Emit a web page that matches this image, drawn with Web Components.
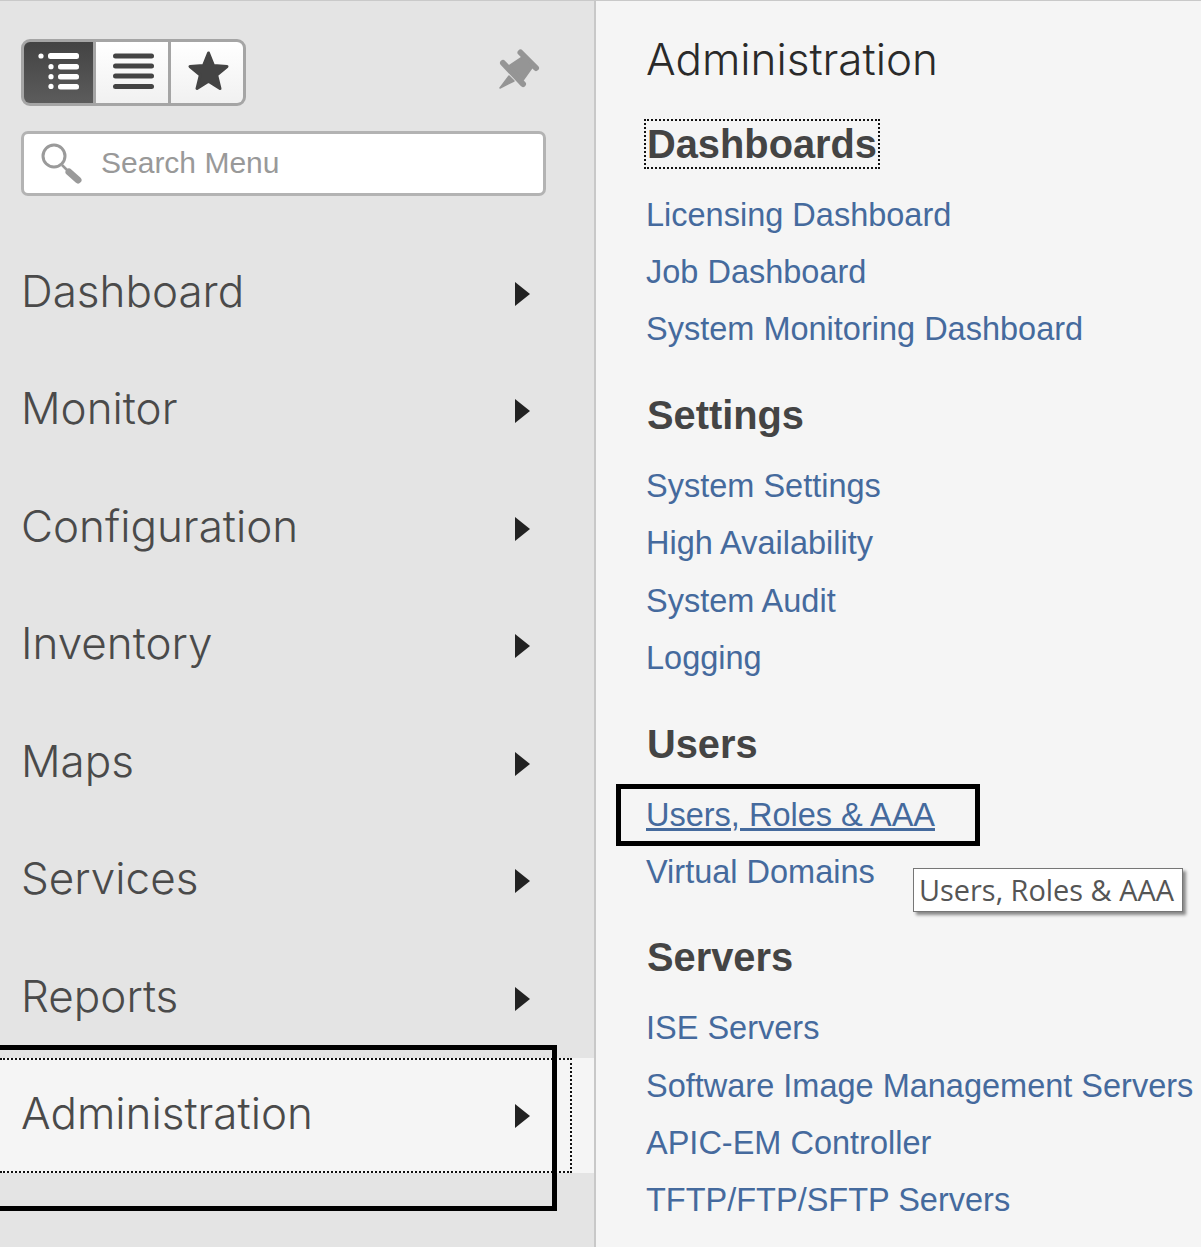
<!DOCTYPE html>
<html>
<head>
<meta charset="utf-8">
<title>Administration menu</title>
<style>
html, body { margin: 0; padding: 0; height: 1247px; overflow: hidden; background: #f5f5f5; }
body { font-family: "Liberation Sans", Arial, sans-serif; }
</style>
</head>
<body>
<nav-shell>
  <side-menu slot="side">
    <menu-item>Dashboard</menu-item>
    <menu-item>Monitor</menu-item>
    <menu-item>Configuration</menu-item>
    <menu-item>Inventory</menu-item>
    <menu-item>Maps</menu-item>
    <menu-item>Services</menu-item>
    <menu-item>Reports</menu-item>
    <menu-item active>Administration</menu-item>
  </side-menu>
  <admin-panel slot="main" heading="Administration">
    <link-group title="Dashboards" focused>
      <a-link>Licensing Dashboard</a-link>
      <a-link>Job Dashboard</a-link>
      <a-link>System Monitoring Dashboard</a-link>
    </link-group>
    <link-group title="Settings">
      <a-link>System Settings</a-link>
      <a-link>High Availability</a-link>
      <a-link>System Audit</a-link>
      <a-link>Logging</a-link>
    </link-group>
    <link-group title="Users">
      <a-link hover>Users, Roles &amp; AAA</a-link>
      <a-link>Virtual Domains</a-link>
    </link-group>
    <link-group title="Servers">
      <a-link>ISE Servers</a-link>
      <a-link>Software Image Management Servers</a-link>
      <a-link>APIC-EM Controller</a-link>
      <a-link>TFTP/FTP/SFTP Servers</a-link>
    </link-group>
  </admin-panel>
  <mark-box slot="over" style="left:-10px;top:1044px;width:567px;height:166px"></mark-box>
  <mark-box slot="over" style="left:616px;top:783px;width:364px;height:62px"></mark-box>
  <hover-tip slot="over" style="left:913px;top:867px">Users, Roles &amp; AAA</hover-tip>
</nav-shell>

<script>
class NavShell extends HTMLElement {
    constructor() {
        super();
        this.attachShadow({mode: 'open'}).innerHTML = `
        <style>
        :host { display: flex; position: relative; width: 1201px; height: 1247px; overflow: hidden; border-top: 1px solid #c9c9c9; box-sizing: border-box; }
        </style>
        <slot name="side"></slot>
        <slot name="main"></slot>
        <slot name="over"></slot>
        `;
    }
}

class SideMenu extends HTMLElement {
    constructor() {
        super();
        this.attachShadow({mode: 'open'}).innerHTML = `
        <style>
        :host { display: block; flex: none; box-sizing: border-box; width: 596px; height: 1246px; background: #e4e4e4; border-right: 2px solid #c8c8c8; padding-top: 38px; }
        .tools { display: flex; justify-content: space-between; align-items: flex-start; height: 67px; padding: 0 49px 0 21px; }
        .pin { margin-top: 6px; }
        view-toggle { flex: none; }
        .find { display: flex; align-items: center; box-sizing: border-box; width: 525px; height: 65px; margin: 25px 0 39.5px 21px; background: #fff; border: 3px solid #b3b3b3; border-radius: 7px; }
        .find svg { flex: none; margin-left: 15px; }
        .find span { margin-left: 16px; font-size: 30px; color: #999; padding-bottom: 2px; }
        .list { display: flex; flex-direction: column; gap: 2.5px; }
        </style>
        <div class="tools">
          <view-toggle></view-toggle>
          <svg class="pin" width="50" height="50" viewBox="0 0 50 50">
            <g fill="#959595" stroke="#959595" stroke-linecap="round" stroke-linejoin="round">
              <path d="M25.5 7.5 41 23" stroke-width="6" fill="none"/>
              <path d="M8 18 28 39" stroke-width="6" fill="none"/>
              <path d="M29 11 38 21 28 35 14 21Z" stroke-width="2"/>
              <path d="M14 31 5 43 19 36Z" stroke-width="1.5"/>
            </g>
          </svg>
        </div>
        <div class="find">
          <svg width="46" height="46" viewBox="0 0 46 46">
            <circle cx="15" cy="15" r="11" fill="none" stroke="#9a9a9a" stroke-width="3"/>
            <path d="M23 24 29 30" stroke="#9a9a9a" stroke-width="2.5"/>
            <path d="M30 31 39 39" stroke="#9a9a9a" stroke-width="7" stroke-linecap="round"/>
          </svg>
          <span>Search Menu</span>
        </div>
        <div class="list"><slot></slot></div>
        `;
    }
}

class ViewToggle extends HTMLElement {
    constructor() {
        super();
        this.attachShadow({mode: 'open'}).innerHTML = `
        <style>
        :host { display: flex; box-sizing: border-box; width: 225px; height: 67px; border: 3px solid #a5a5a5; border-radius: 9px; background: #a5a5a5; overflow: hidden; gap: 3px; }
        .b { display: flex; flex: none; height: 61px; background: linear-gradient(#fff, #f1f1f1); }
        .b.on { width: 69px; background: linear-gradient(#434343, #5c5c5c); }
        .b.m { width: 72px; }
        .b.l { width: 75px; }
        svg { display: block; }
        </style>
        <div class="b on">
          <svg width="69" height="61" viewBox="24 42 69 61" fill="#fff">
            <circle cx="41" cy="56" r="2.6"/>
            <rect x="48" y="53" width="31" height="6" rx="2.5"/>
            <circle cx="51" cy="66.7" r="2.6"/><rect x="58" y="64" width="21" height="5.5" rx="2.5"/>
            <circle cx="51" cy="76.7" r="2.6"/><rect x="58" y="74" width="21" height="5.5" rx="2.5"/>
            <circle cx="51" cy="86.4" r="2.6"/><rect x="58" y="84" width="21" height="5.5" rx="2.5"/>
          </svg>
        </div>
        <div class="b m">
          <svg width="72" height="61" viewBox="96 42 72 61" fill="#444">
            <rect x="113" y="53.5" width="41" height="5" rx="2.5"/>
            <rect x="113" y="63.5" width="41" height="5" rx="2.5"/>
            <rect x="113" y="73.5" width="41" height="5" rx="2.5"/>
            <rect x="113" y="84" width="41" height="5" rx="2.5"/>
          </svg>
        </div>
        <div class="b l">
          <svg width="75" height="61" viewBox="171 42 75 61">
            <path d="M208.5 53 213.5 65.5 227 66.5 216.7 75 220 88.5 208.5 81.2 197 88.5 200.3 75 190 66.5 203.5 65.5Z" fill="#444" stroke="#444" stroke-width="3" stroke-linejoin="round"/>
          </svg>
        </div>
        `;
    }
}

class MenuItem extends HTMLElement {
    constructor() {
        super();
        this.attachShadow({mode: 'open'}).innerHTML = `
        <style>
        :host { display: block; height: 115px; color: #4a4a4a; }
        :host([active]) { background: #f5f5f5; }
        .row { display: flex; align-items: center; justify-content: space-between; box-sizing: border-box; width: 572px; height: 115px; padding: 0 40px 0 21px; border: 2px dotted transparent; border-left: 0; font: 300 44px Inter, "Liberation Sans", sans-serif; }
        :host([active]) .row { border-color: #111; }
        .t { padding-bottom: 5px; }
        svg { flex: none; margin-top: 1px; }
        </style>
        <div class="row">
          <span class="t"><slot></slot></span>
          <svg width="15" height="24" viewBox="0 0 15 24"><path d="M0 0 15 12 0 24Z" fill="#222"/></svg>
        </div>
        `;
    }
}

class AdminPanel extends HTMLElement {
    constructor() {
        super();
        this.attachShadow({mode: 'open'}).innerHTML = `
        <style>
        :host { display: block; flex: 1; box-sizing: border-box; padding: 33px 0 0 50px; background: #f5f5f5; }
        h1 { margin: 0 0 35px; font: 300 44px/50px Inter, "Liberation Sans", sans-serif; color: #2a2a2a; }
        </style>
        <h1></h1>
        <slot></slot>
        `;
        this.shadowRoot.querySelector('h1').textContent = this.getAttribute('heading');
    }
}

class LinkGroup extends HTMLElement {
    constructor() {
        super();
        this.attachShadow({mode: 'open'}).innerHTML = `
        <style>
        :host { display: block; margin-bottom: 31.6px; }
        h2 { margin: 0 0 18px; padding-left: 1px; font: bold 39.8px/50px "Liberation Sans", Arial, sans-serif; color: #444; white-space: nowrap; }
        :host([focused]) span { outline: 2px dotted #111; outline-offset: 1px; }
        </style>
        <h2><span></span></h2>
        <slot></slot>
        `;
        this.shadowRoot.querySelector('span').textContent = this.getAttribute('title');
    }
}

class ALink extends HTMLElement {
    constructor() {
        super();
        this.attachShadow({mode: 'open'}).innerHTML = `
        <style>
        :host { display: block; height: 57.2px; font: 32.5px/57.2px "Liberation Sans", Arial, sans-serif; color: #456a9d; white-space: nowrap; }
        :host([hover]) { text-decoration: underline; }
        </style>
        <slot></slot>
        `;
    }
}

class MarkBox extends HTMLElement {
    constructor() {
        super();
        this.attachShadow({mode: 'open'}).innerHTML = `
        <style>
        :host { display: block; position: absolute; box-sizing: border-box; border: 5px solid #000; }
        </style>
        `;
    }
}

class HoverTip extends HTMLElement {
    constructor() {
        super();
        this.attachShadow({mode: 'open'}).innerHTML = `
        <style>
        :host { display: block; position: absolute; box-sizing: border-box; width: 270px; height: 44px; padding-left: 5px; background: #fff; border: 1px solid #767676; box-shadow: 3px 3px 3px #888; font: 28.9px/41px "Open Sans", sans-serif; color: #555; white-space: nowrap; }
        </style>
        <slot></slot>
        `;
    }
}

customElements.define('nav-shell', NavShell);
customElements.define('side-menu', SideMenu);
customElements.define('view-toggle', ViewToggle);
customElements.define('menu-item', MenuItem);
customElements.define('admin-panel', AdminPanel);
customElements.define('link-group', LinkGroup);
customElements.define('a-link', ALink);
customElements.define('mark-box', MarkBox);
customElements.define('hover-tip', HoverTip);
</script>
</body>
</html>
